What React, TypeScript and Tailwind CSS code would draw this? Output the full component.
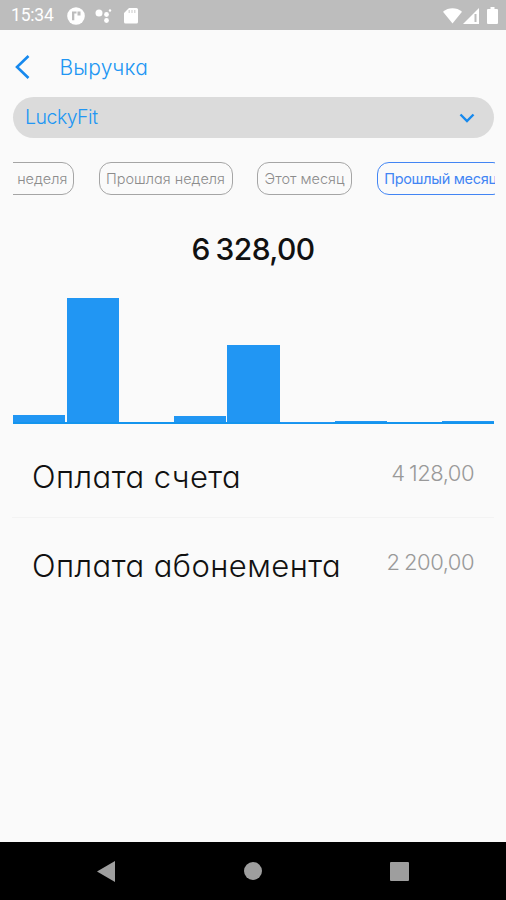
import React, { useState } from "react";

const bars = [7, 124, 0, 6, 77, 0.5, 1.5, 0, 1];

const operations = [
  { title: "Оплата счета", amount: "4 128,00" },
  { title: "Оплата абонемента", amount: "2 200,00" },
];

const periods = [
  { label: "Эта неделя", width: "w-[93px]" },
  { label: "Прошлая неделя", width: "w-[134px]" },
  { label: "Этот месяц", width: "w-[95px]" },
  { label: "Прошлый месяц", width: "w-[128px]" },
];

function StatusBar() {
  return (
    <div className="flex h-[30px] shrink-0 items-center bg-[#bdbdbd] pt-px pr-[8px] pl-[11px] text-white">
      <span className="w-[56px] font-['Roboto'] text-[17.5px] leading-[29px] tracking-[-0.2px]">
        15:34
      </span>
      <svg width="18" height="18" viewBox="0 0 18 18">
        <circle cx="9" cy="9" r="8.8" fill="white" />
        <path d="M5 4.500h4.500v2H7.300v6.800H5zM10.500 4.500h3v4h-3z" fill="#bdbdbd" />
      </svg>
      <svg className="ml-[10px]" width="17" height="16" viewBox="0 0 17 16" fill="white">
        <circle cx="4" cy="5" r="3.5" />
        <circle cx="11.5" cy="6.5" r="2.4" />
        <circle cx="11.5" cy="12.5" r="2.4" />
        <circle cx="15" cy="2.5" r="1.2" />
      </svg>
      <svg className="ml-[12px]" width="14" height="17" viewBox="0 0 14 17">
        <path d="M5 1h7.5A1.5 1.5 0 0 1 14 2.500v12.500a1.500 1.500 0 0 1-1.500 1.500h-11A1.500 1.500 0 0 1 0 15V6z" fill="white" />
        <path d="M5.200 3v3M8 3v3M10.800 3v3" stroke="#d2d2d2" strokeWidth="1.200" />
      </svg>
      <svg className="ml-auto" width="19" height="16" viewBox="0 0 19 16" fill="white">
        <path d="M0 3.700C5.500-.8 13.500-.8 19 3.700L9.500 15.500z" />
      </svg>
      <svg className="ml-[1px]" width="16" height="16" viewBox="0 0 16 16">
        <path d="M16 0v16H0z" fill="white" />
        <path d="M11.500 6v8h2V6z" fill="#bdbdbd" />
      </svg>
      <svg className="ml-[8px]" width="11" height="17" viewBox="0 0 11 17" fill="white">
        <path d="M3.500 0h4v2H10a1 1 0 0 1 1 1v13a1 1 0 0 1-1 1H1a1 1 0 0 1-1-1V3a1 1 0 0 1 1-1h2.500z" />
      </svg>
    </div>
  );
}

function RevenueChart() {
  return (
    <div className="mr-[12px] ml-[13px] mt-[27px] flex h-[128px] shrink-0 items-end gap-[1.5px] border-b-2 border-[#1495ee]">
      {bars.map((height, i) => (
        <div key={i} className="flex-1 bg-[#2196f3]" style={{ height }} />
      ))}
    </div>
  );
}

function NavigationBar() {
  return (
    <div className="flex h-[58px] shrink-0 items-center justify-between bg-black pr-[97px] pl-[97px]">
      <svg width="18" height="21" viewBox="0 0 18 21" fill="#9e9e9e">
        <path d="M18 0v21L0 10.500z" />
      </svg>
      <div className="size-[18px] rounded-full bg-[#9e9e9e]" />
      <div className="size-[19px] rounded-[1px] bg-[#9e9e9e]" />
    </div>
  );
}

function App() {
  const [period, setPeriod] = useState("Прошлый месяц");

  return (
    <div className="flex h-[900px] w-[506px] flex-col overflow-hidden bg-[#fafafa] font-['Inter',sans-serif] [font-feature-settings:'cv11']">
      <StatusBar />
      <header className="flex h-[67px] shrink-0 items-center pt-[6px] pl-[15px] text-[#2196f3]">
        <svg width="15" height="24" viewBox="0 0 15 24" fill="none" stroke="#1689ee" strokeWidth="2.600">
          <path d="M13.500 1L2 12l11.500 11" />
        </svg>
        <h1 className="ml-[29.5px] pt-[2px] text-[21px] font-light tracking-[0.2px]">Выручка</h1>
      </header>
      <button className="mr-[12px] ml-[13px] flex h-[41px] shrink-0 items-center justify-between rounded-full bg-[#dbdbdb] pr-[19px] pl-[12px] text-[19.5px] font-light tracking-[-0.5px] text-[#2196f3]">
        LuckyFit
        <svg width="16" height="10" viewBox="0 0 16 10" fill="none" stroke="#1689ee" strokeWidth="2.400">
          <path d="M1.500 1.500L8 8l6.500-6.500" />
        </svg>
      </button>
      {/* Scrolled to the last period */}
      <div className="mr-[11px] ml-[13px] mt-[24px] flex shrink-0 gap-[24.5px] overflow-hidden">
        {periods.map((p, i) => (
          <button
            key={p.label}
            onClick={() => setPeriod(p.label)}
            className={`${p.width} ${i === 0 ? "-ml-[32px]" : ""} ${
              period === p.label
                ? "border-[#4285f4] font-normal tracking-[-0.3px] text-[#4285f4]"
                : "border-[#a5a5a5] font-light text-[#8c8c8c]"
            } h-[33px] shrink-0 rounded-[12px] border text-[14.5px] whitespace-nowrap`}
          >
            {p.label}
          </button>
        ))}
      </div>
      <div className="mt-[34px] h-[40px] shrink-0 text-center text-[30px] leading-[40px] font-medium tracking-[-0.6px] text-[#111] [word-spacing:-1.5px]">
        6 328,00
      </div>
      <RevenueChart />
      <main className="mx-[12px] flex-1 pt-[5px]">
        {operations.map((op, i) => (
          <div
            key={op.title}
            className={`flex h-[89px] justify-between pr-[20px] pl-[20px] ${
              i === 0 ? "border-b border-[#f3f3f3]" : ""
            }`}
          >
            <span className="pt-[28px] text-[31px] leading-[40px] font-light tracking-[0.45px] text-[#111]">
              {op.title}
            </span>
            <span className="pt-[28px] text-[22px] leading-[32px] font-light tracking-[-0.5px] text-[#999] [word-spacing:-1.2px]">
              {op.amount}
            </span>
          </div>
        ))}
      </main>
      <NavigationBar />
    </div>
  );
}

export default App;
